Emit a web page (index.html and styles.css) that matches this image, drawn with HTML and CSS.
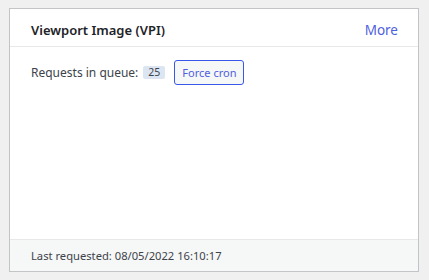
FILE: index.html
```html
<!DOCTYPE html>
<html lang="en">
<head>
<meta charset="UTF-8">
<meta name="viewport" content="width=device-width, initial-scale=1.0">
<title>Viewport Image</title>
<link rel="stylesheet" href="styles.css">
</head>
<body>

<div class="widget">
    <div class="widget-header">
        <h2>Viewport Image (VPI)</h2>
        <a href="#" class="more-link">More</a>
    </div>
    <div class="widget-body">
        <div class="queue-row">
            <span class="label">Requests in queue:</span>
            <span class="count">25</span>
            <button class="btn-cron">Force cron</button>
        </div>
    </div>
    <div class="widget-footer">
        Last requested: 08/05/2022 16:10:17
    </div>
</div>

</body>
</html>
```

FILE: styles.css
```css
body {
    font-family: "Noto Sans", "Open Sans", sans-serif;
    margin: 0;
    padding: 8px 10px 8px 9px;
    background-color: #f0f0f1;
    color: #3c434a;
}
.widget {
    width: 408px;
    height: 262px;
    background-color: #fff;
    border: 1px solid #c3c4c7;
    display: flex;
    flex-direction: column;
}
.widget-header {
    display: flex;
    justify-content: space-between;
    align-items: center;
    height: 33px;
    padding: 4px 20px 0 21px;
    border-bottom: 1px solid #e8e8e8;
}
.widget-header h2 {
    margin: 0;
    font-size: 13px;
    font-weight: 600;
    color: #1d2327;
}
.more-link {
    color: #4f5fe0;
    text-decoration: none;
    font-size: 13.5px;
}
.widget-body {
    flex: 1;
    padding: 13px 21px;
}
.queue-row {
    display: flex;
    align-items: center;
    font-size: 12px;
}
.label {
    margin-right: 5px;
}
.count {
    background-color: #dce6f2;
    border-radius: 2px;
    font-size: 10.5px;
    padding: 0 5px;
    line-height: 13px;
    margin-right: 9px;
}
.btn-cron {
    font-family: inherit;
    font-size: 11px;
    color: #4f5fe0;
    background-color: #f6f7f7;
    border: 1px solid #3858e9;
    border-radius: 3px;
    height: 25px;
    padding: 0 7px;
}
.widget-footer {
    height: 31px;
    display: flex;
    align-items: center;
    padding: 0 21px;
    background-color: #f6f7f7;
    border-top: 1px solid #e8e8e8;
    font-size: 11.2px;
}
```
